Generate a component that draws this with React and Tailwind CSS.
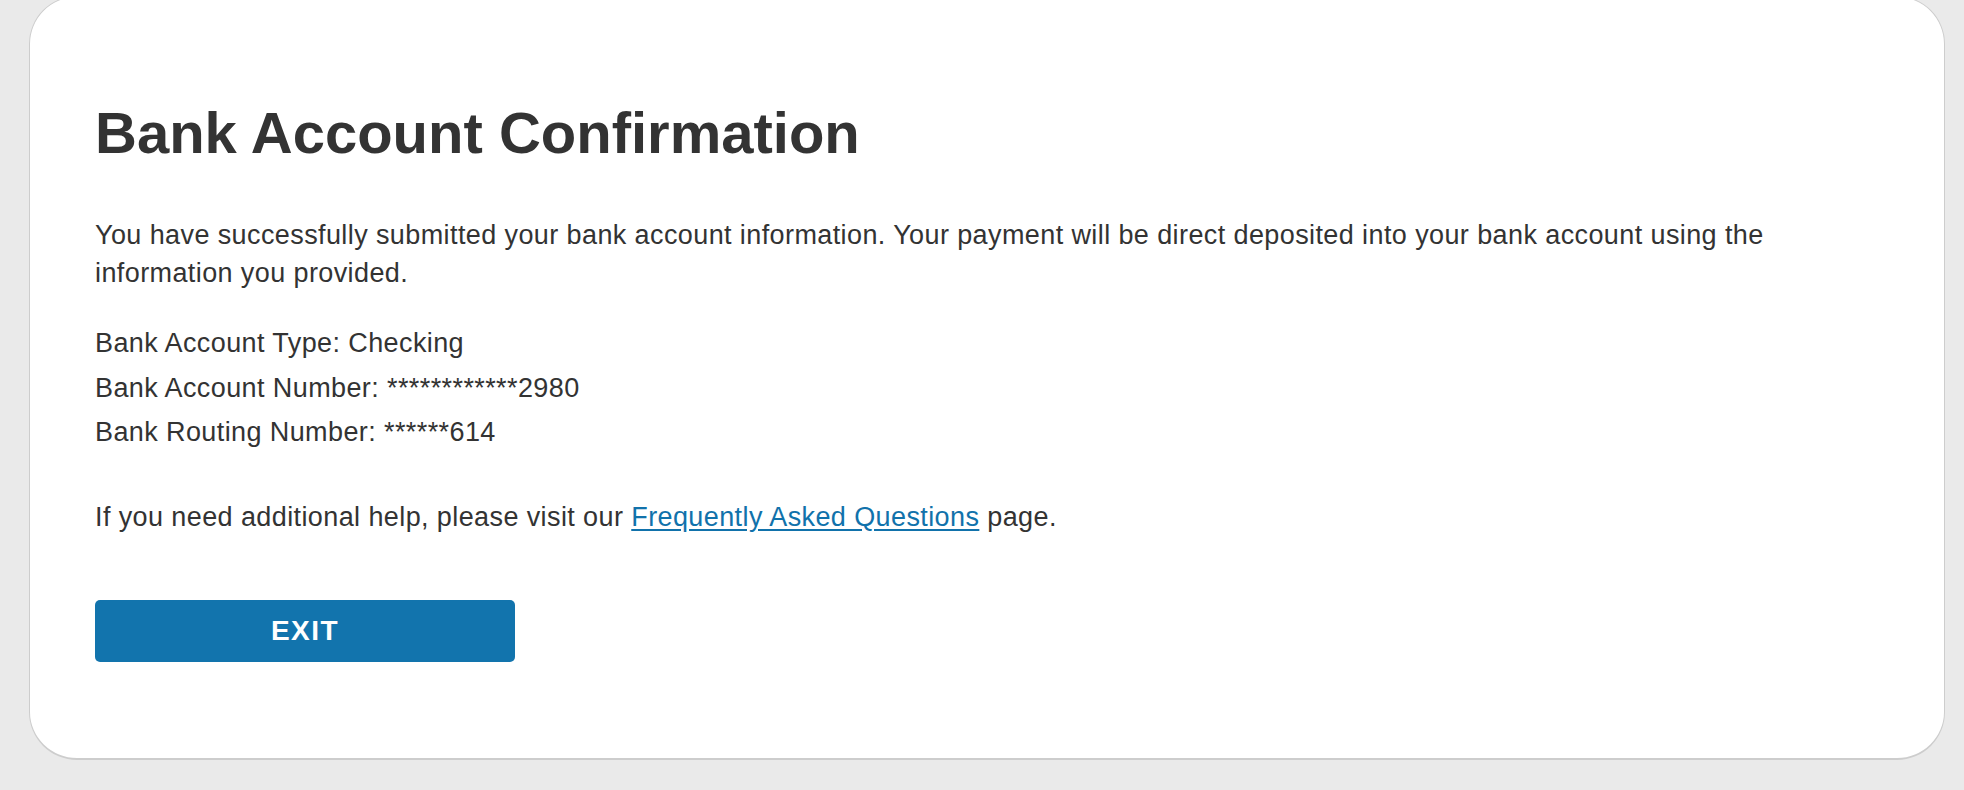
export default function App() {
  return (
    <div className="min-h-screen bg-[#eaeaea] pl-[29px] pr-[19px] overflow-hidden font-['Liberation_Sans',Arial,sans-serif] text-[#333333]">
      <div className="-mt-1 bg-white border border-[#cdcdcd] border-b-2 rounded-[48px] pl-[65px] pr-[60px] pt-[102px] pb-[96px]">
        <h1 className="text-[58px] leading-[68px] font-bold">Bank Account Confirmation</h1>

        <p className="mt-[49px] text-[27px] leading-[38px] tracking-[0.4px]">
          You have successfully submitted your bank account information. Your payment will be direct deposited into your bank account using the information you provided.
        </p>

        <div className="mt-[29px] text-[27px] leading-[44.5px] tracking-[0.4px]">
          <p>Bank Account Type: Checking</p>
          <p>Bank Account Number: ************2980</p>
          <p>Bank Routing Number: ******614</p>
        </div>

        <p className="mt-[43px] text-[27px] leading-[38px] tracking-[0.4px]">
          If you need additional help, please visit our{" "}
          <a href="#" className="text-[#1172ab] underline underline-offset-[3px]">
            Frequently Asked Questions
          </a>{" "}
          page.
        </p>

        <button className="mt-[64px] w-[420px] h-[62px] rounded-[5px] bg-[#1274ad] text-white text-[28px] font-extrabold tracking-[1.5px]">
          EXIT
        </button>
      </div>
    </div>
  );
}
